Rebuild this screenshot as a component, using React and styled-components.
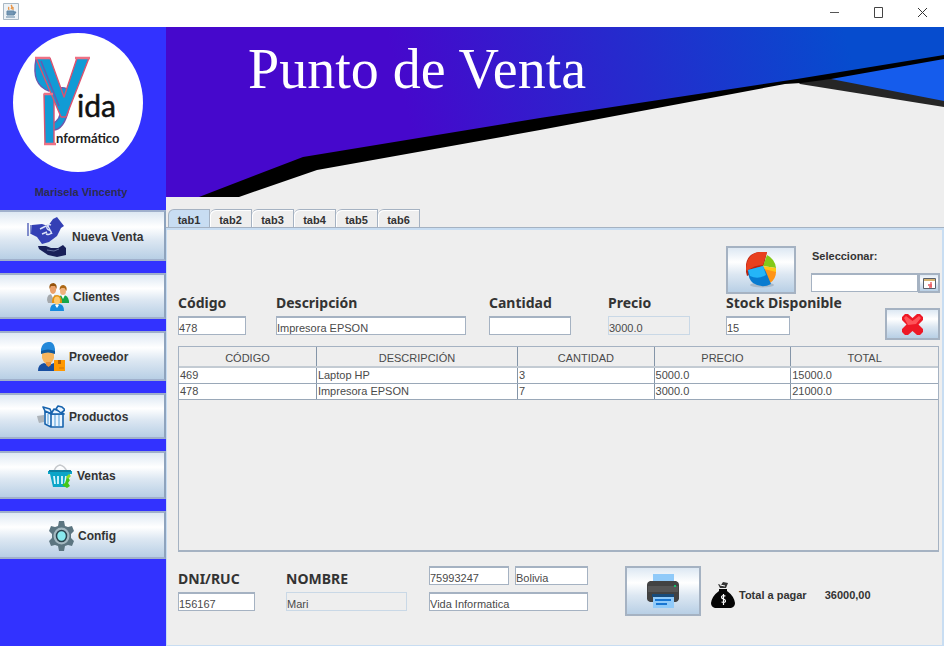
import React from "react";
import styled, { createGlobalStyle } from "styled-components";

const steel = "#a5b2c2";
const face = "linear-gradient(#dde8f3 0%, #ffffff 32%, #dce7f2 60%, #b8cfe5 100%)";

const GlobalStyle = createGlobalStyle`
  *, *::before, *::after { box-sizing: border-box; }
  body {
    margin: 0;
    background: #eeeeee;
    color: #333333;
    font: 11px/14px "Liberation Sans", Arial, sans-serif;
  }
  button, input { font: inherit; color: inherit; margin: 0; }
`;

const Window = styled.div`
  display: flex;
  flex-direction: column;
  min-height: 100vh;
`;

const TitleBar = styled.header`
  display: flex;
  justify-content: space-between;
  align-items: flex-start;
  height: 27px;
  padding-left: 3px;
  background: #ffffff;
`;

const AppIcon = styled.svg`
  width: 16px;
  height: 17px;
  margin-top: 3px;
`;

const WindowButtons = styled.div`
  display: flex;
`;

const WindowButton = styled.button`
  width: 44px;
  height: 25px;
  padding: 0;
  border: 0;
  background: none;
  svg { display: block; margin: 0 auto; }
`;

const Body = styled.div`
  display: flex;
  flex: 1;
`;

const Sidebar = styled.aside`
  display: flex;
  flex-direction: column;
  flex: 0 0 166px;
  background: #3232ff;
`;

const Logo = styled.svg`
  width: 130px;
  height: 139px;
  margin: 6px 0 0 13px;
`;

const UserName = styled.p`
  height: 19px;
  margin: 12px 4px 7px 0;
  padding-top: 1px;
  text-align: center;
  font-weight: bold;
  color: #2c2c50;
`;

const Nav = styled.nav`
  display: flex;
  flex-direction: column;
  gap: 12px;
`;

const NavButton = styled.button`
  display: flex;
  align-items: center;
  gap: ${(p) => p.$gap || 4}px;
  height: ${(p) => p.$height}px;
  padding: 2px 0 0 ${(p) => p.$indent}px;
  border: solid #a0b0cc;
  border-width: 2px 2px 2px 0;
  border-right-color: #8ea3bd;
  background: ${face};
  font-size: 12px;
  font-weight: bold;
  svg { flex: none; }
`;

const Main = styled.main`
  display: flex;
  flex-direction: column;
  flex: 1;
  min-width: 0;
`;

const Banner = styled.div`
  position: relative;
  height: 170px;
`;

const BannerArt = styled.svg`
  position: absolute;
  inset: 0;
  width: 100%;
  height: 100%;
`;

const BannerTitle = styled.h1`
  position: relative;
  margin: 0;
  padding: 10px 0 0 82px;
  font: 56px/64px "Liberation Serif", "Times New Roman", serif;
  color: #ffffff;
`;

const TabList = styled.div`
  display: flex;
  padding: 12px 0 0 2px;
`;

const Tab = styled.button`
  width: 42px;
  height: 19px;
  padding: 2px 0 0;
  border: 1px solid ${steel};
  border-width: 1px 1px 0 0;
  border-top-left-radius: 6px;
  background: ${(p) => (p.$active ? "#c8ddf2" : "#eeeeee")};
  box-shadow: inset 1px 1px 0 ${(p) => (p.$active ? "#c8ddf2" : "#ffffff")};
  font-weight: bold;
  &:first-child { border-left-width: 1px; }
`;

const Panel = styled.section`
  display: flex;
  flex-direction: column;
  flex: 1;
  padding: 16px 2px 21px 11px;
  border: solid #c8ddf2;
  border-width: 2px 2px 1px 1px;
  box-shadow: 0 -1px 0 ${steel};
`;

const ProductForm = styled.form`
  display: grid;
  grid-template-columns: 98fr 213fr 119fr 118fr 214fr;
`;

const Tools = styled.div`
  grid-column: 5;
  display: flex;
  justify-content: space-between;
`;

const IconButton = styled.button`
  display: flex;
  align-items: center;
  justify-content: center;
  flex: none;
  width: ${(p) => p.$width}px;
  height: ${(p) => p.$height}px;
  padding: 0;
  border: 2px solid ${steel};
  background: ${face};
`;

const DatePicker = styled.div`
  width: 129px;
  padding-top: 3px;
  label { display: block; height: 24px; padding-left: 1px; font-weight: bold; }
`;

const DateRow = styled.div`
  display: flex;
`;

const Field = styled.div`
  display: flex;
  flex-direction: column;
  align-items: flex-start;
`;

const Caption = styled.label`
  height: 22px;
  font: bold 14px/18px "Noto Sans", Tahoma, sans-serif;
  white-space: nowrap;
`;

const TextBox = styled.input`
  width: ${(p) => (p.$width ? p.$width + "px" : "100%")};
  min-width: 0;
  height: 19px;
  padding: 3px 0 0;
  border: 1px solid ${steel};
  border-top-width: 2px;
  border-radius: 0;
  outline: 0;
  background: #ffffff;
  color: #4a4a4a;
  &:disabled {
    background: #eeeeee;
    border: 1px solid #c9d8e6;
    padding-top: 4px;
  }
`;

const StockRow = styled.div`
  display: flex;
  justify-content: space-between;
  align-items: flex-start;
  height: 46px;
`;

const DeleteSlot = styled.div`
  padding-top: 14px;
`;

const TableArea = styled.div`
  flex: 1;
  min-height: 140px;
  margin: 6px 1px 14px 0;
  border: 1px solid ${steel};
  border-bottom-width: 2px;
`;

const Items = styled.table`
  width: 100%;
  table-layout: fixed;
  border-collapse: collapse;
  color: #4a4a4a;
  th {
    height: 20px;
    padding: 2px 0 0;
    font-weight: normal;
    border-right: 1px solid #8495a8;
    border-bottom: 2px solid #c3cbd3;
  }
  td {
    height: 16px;
    padding: 1px 0 0 1px;
    line-height: 13px;
    background: #ffffff;
    border-right: 1px solid #8495a8;
    border-bottom: 1px solid #9aa8b8;
  }
  th:last-child, td:last-child { border-right: 0; }
`;

const Col = styled.col`
  width: ${(p) => p.$share}%;
`;

const Footer = styled.form`
  display: flex;
  align-items: flex-start;
`;

const Client = styled.div`
  display: flex;
  gap: 31px;
  padding-top: 4px;
`;

const ClientField = styled(Field)`
  width: ${(p) => p.$width}px;
`;

const Details = styled.div`
  display: grid;
  grid-template-columns: 80px 73px;
  gap: 7px 6px;
  margin: 0 37px 0 22px;
  input:last-child { grid-column: 1 / 3; }
`;

const Total = styled.div`
  display: flex;
  align-items: center;
  gap: 4px;
  height: 58px;
  margin-left: 10px;
  font-weight: bold;
  white-space: nowrap;
  output { margin-left: 14px; }
`;

const PaySheet = () => (
  <svg width="39" height="42" viewBox="0 0 39 42">
    <path d="M1 7v13M4 9v9" stroke="#5261b8" strokeWidth="1.4" />
    <path d="M5 9l10-1 6 2 5-7 4-2 7 9-3 2-4 8-8 6-7 2-5-7-6-3z" fill="#3440b5" />
    <path d="M13 13l6-3M15 18l5-2M24 9c-4-2-6 4-2 5s2 6-3 4M20 8l5 10" fill="none" stroke="#dce4f8" strokeWidth="1.4" />
    <path d="M11 30h8l5 2 7 0 5-3 3 3v7l-9 2-9-2-9-6z" fill="#182059" />
    <path d="M20 34l7 1 5-2" stroke="#6270a0" fill="none" />
  </svg>
);

const People = () => (
  <svg width="22" height="29" viewBox="0 0 22 29">
    <path d="M0 17q0-6 5-6t5 6v3H1z" fill="#a5a9ad" />
    <path d="M11 18q0-6 5-6t6 6v2h-9z" fill="#16a64a" />
    <path d="M4 11l2 4 2-4M14 12l2 4 2-4" fill="#fff" />
    <ellipse cx="6" cy="6" rx="3.2" ry="5" fill="#eaa06a" />
    <path d="M2.500 6q-1-6 4-6 4 1 3 6L8 3H4z" fill="#94520b" />
    <ellipse cx="16" cy="7.500" rx="3" ry="4.600" fill="#f0b27c" />
    <path d="M12.500 7q0-5 4-5 4 1 3 6l-2-3h-3z" fill="#ad6815" />
    <path d="M5 20q0-8 5-8t5 8z" fill="#e5930e" />
    <ellipse cx="10" cy="17.500" rx="3" ry="4" fill="#ffc86d" />
    <path d="M3 28q0-7 5-7l2 2 2-2q5 0 5 7z" fill="#168bdd" />
    <path d="M8 22l2 3 2-3z" fill="#fff" />
  </svg>
);

const Courier = () => (
  <svg width="28" height="30" viewBox="0 0 28 30">
    <path d="M1 29q0-7 6-8l5 2 5-2v8z" fill="#174ea0" />
    <path d="M5 9h12v7q-2 6-6 6t-6-6z" fill="#f8b55e" />
    <path d="M9 20h5v3l-2.500 2L9 23z" fill="#e8903a" />
    <path d="M4 11V7q1-6 7-7t7 7v4l-3-2H7z" fill="#2489da" />
    <path d="M4 9q7-3 14 0v3q-7-3-14 0z" fill="#11599f" />
    <path d="M17 18h11v11H17z" fill="#ff9800" />
    <path d="M21 18h3v4h-3z" fill="#ad5f09" />
    <path d="M22 26h5" stroke="#d47608" />
  </svg>
);

const Boxes = () => (
  <svg width="28" height="24" viewBox="0 0 28 24">
    <path d="M0 11l7-1v7l-5 1-1-3z" fill="#aeb4ba" />
    <g fill="#eaf5ff" stroke="#1763ad" strokeWidth="1.6" strokeLinejoin="round">
      <path d="M8 6l6 3v13l-6-3zM14 9h12v13H14z" />
      <path d="M8 6L6 2l7 2 2 5zM14 9l3-5 5 2 5 3z" />
      <path d="M19 4l2-3 4 1 3 3-4 3z" />
    </g>
    <path d="M18 10v11M22 10v11M11 9v10" stroke="#72b1e3" strokeWidth="1.3" />
  </svg>
);

const Basket = () => (
  <svg width="25" height="24" viewBox="0 0 25 24">
    <path d="M6 8q1-6 6-7 5 1 7 7" fill="none" stroke="#c6c9cd" strokeWidth="1.6" />
    <path d="M0 7h24v3h-2l-3 13H5L2 10H0z" fill="#0ba5c8" />
    <path d="M1 7h22" stroke="#0d7e9f" strokeWidth="2" />
    <path d="M6 12l1 8M10 12v8M14 12v8M18 12l-1 8" stroke="#d9f7ff" strokeWidth="1.8" />
    <path d="M19 13l3 3-2 3 2 3-3 2-5-3 3-2 1-3z" fill="#42c818" />
    <path d="M21 10l2 2-3 3-2-2z" fill="#8ddd24" />
  </svg>
);

const Gear = () => (
  <svg width="25" height="30" viewBox="0 0 25 30">
    <path d="M10 0h5l1 5 3 1 4-1 2 5-3 3v4l3 3-2 5-4-1-3 1-1 5h-5l-1-5-3-1-4 1-2-5 3-3v-4l-3-3 2-5 4 1 3-1z" fill="#5c7580" />
    <ellipse cx="12.500" cy="15" rx="8" ry="8.500" fill="#a5b9c1" />
    <ellipse cx="12.500" cy="15" rx="5" ry="5.500" fill="#89e9ed" stroke="#29444d" strokeWidth="1.500" />
  </svg>
);

const PieChart = () => (
  <svg width="31" height="36" viewBox="0 0 31 36">
    <ellipse cx="16" cy="33" rx="12" ry="2.500" fill="#a9b9c9" />
    <path d="M0 20Q-2 2 13 0h8l-3 13-7 6-10 5z" fill="#b82412" />
    <path d="M0 17Q1 1 14 0h7l-4 13q-9 0-16 6z" fill="#e8401f" />
    <path d="M21 3q8 4 9 13l-13-2z" fill="#83c918" />
    <path d="M17 14l13 2v5l-11-2z" fill="#ffc515" />
    <path d="M18 17l12 3q0 7-6 11l-5-8z" fill="#ff9416" />
    <path d="M2 18l15-4 3 6 5 12q-9 5-18-1-5-4-5-13z" fill="#087bd0" />
    <path d="M2 18l15-4 3 9q-8 5-16 1z" fill="#24b5f8" />
  </svg>
);

const CalendarIcon = () => (
  <svg width="13" height="11" viewBox="0 0 13 11">
    <path d="M.5.5h12v10H.5z" fill="#fff" stroke="#59606b" />
    <path d="M1 2h11" stroke="#c89b43" strokeWidth="1.5" />
    <path d="M5 7h4M8 4v5M6 9h3" stroke="#e75a60" strokeWidth="1.4" />
  </svg>
);

const Cross = () => (
  <svg width="21" height="21" viewBox="0 0 21 21">
    <path d="M3 0h3l4.500 4L15 0h3l3 3v3l-4.500 4.500L21 15v3l-3 3h-3l-4.500-4L6 21H3l-3-3v-3l4.500-4.500L0 6V3z" fill="#ee1826" />
    <path d="M4 2l6.500 5L17 2l2 2-5 6-8 1-4-7z" fill="#ff5359" />
  </svg>
);

const Printer = () => (
  <svg width="32" height="34" viewBox="0 0 32 34">
    <path d="M6 0h21v9H6z" fill="#90caf9" />
    <path d="M3 7h26q3 1 3 4v14q-1 3-3 3H3q-3-1-3-3V11q0-3 3-4z" fill="#424242" />
    <path d="M1 12h30v6H1z" fill="#555" />
    <circle cx="28" cy="12" r="1" fill="#00e676" />
    <path d="M5 20h22v3H5z" fill="#174b7b" />
    <path d="M6 23h21v11H6z" fill="#90caf9" />
    <path d="M8 26h16M9 30h11" stroke="#1976d2" strokeWidth="2" />
  </svg>
);

const MoneyBag = () => (
  <svg width="24" height="26" viewBox="0 0 24 26">
    <path d="M7 2l3 1 2-3 5 1-2 5H9z" fill="#343434" />
    <path d="M9 3l5 1" stroke="#fff" />
    <path d="M8 7h8v2q7 5 8 12 0 4-4 5H4q-4-1-4-5 1-7 8-12z" fill="#050505" />
    <path d="M14.500 14q-4-1-4 1 0 1.500 2 2 2 .5 2 2 0 2-4 1M12.500 12v11" fill="none" stroke="#fff" strokeWidth="1.200" />
  </svg>
);

const BrandLogo = () => (
  <Logo viewBox="0 0 130 139" role="img" aria-label="Vida Informático">
    <ellipse cx="65" cy="69.500" rx="65" ry="69.500" fill="#ffffff" />
    <g fill="#119bd5" stroke="#dc526f" strokeWidth="1.400" strokeLinejoin="round">
      <path d="M23 26Q18 52 36 58l6-4z" stroke="#6c58ae" />
      <path d="M46 55q15-3 10 20t-17 22v-6q9-4 9-16z" stroke="#6c58ae" />
      <path d="M31 61h10v50H32z" />
      <path d="M23 25h14l14 39 13-39h12L53 84h-5z" />
      <path d="M28 28l18 45" fill="none" stroke="#6c58ae" />
    </g>
    <path d="M22 25h15M62 25h15M31 111h12M31 61h9" stroke="#ed7185" strokeWidth="2.500" />
    <text x="64" y="84" fontFamily="Lato, sans-serif" fontSize="30" fill="#111" stroke="#111" strokeWidth=".5">ida</text>
    <text x="43" y="110" fontFamily="Lato, sans-serif" fontSize="13" fontWeight="bold" fill="#222">nformático</text>
  </Logo>
);

const navItems = [
  { label: "Nueva Venta", icon: PaySheet, height: 51, indent: 27, gap: 6 },
  { label: "Clientes", icon: People, height: 46, indent: 47 },
  { label: "Proveedor", icon: Courier, height: 50, indent: 37 },
  { label: "Productos", icon: Boxes, height: 46, indent: 37 },
  { label: "Ventas", icon: Basket, height: 48, indent: 48 },
  { label: "Config", icon: Gear, height: 48, indent: 49 },
];

const tabs = ["tab1", "tab2", "tab3", "tab4", "tab5", "tab6"];

const fields = [
  { id: "codigo", label: "Código", value: "478", width: 68 },
  { id: "descripcion", label: "Descripción", value: "Impresora EPSON", width: 190 },
  { id: "cantidad", label: "Cantidad", value: "", width: 82 },
  { id: "precio", label: "Precio", value: "3000.0", width: 82, disabled: true },
];

const columns = [
  { title: "CÓDIGO", share: 18.1 },
  { title: "DESCRIPCIÓN", share: 26.5 },
  { title: "CANTIDAD", share: 18 },
  { title: "PRECIO", share: 18 },
  { title: "TOTAL", share: 19.4 },
];

const rows = [
  ["469", "Laptop HP", "3", "5000.0", "15000.0"],
  ["478", "Impresora EPSON", "7", "3000.0", "21000.0"],
];

export default function App() {
  const [active, setActive] = React.useState("tab1");
  return (
    <Window>
      <GlobalStyle />
      <TitleBar>
        <AppIcon viewBox="0 0 16 17" aria-hidden="true">
          <path d="M.5.500h15v16H.5z" fill="#edf2f6" stroke="#a9b8c4" />
          <path d="M8 2q2 2 0 4M6 4q-1 1 0 3M10 4v3" stroke="#e69345" fill="none" strokeWidth="1.300" />
          <path d="M4 8h7v4H4zM11 9h2l-2 3M3 14h9" fill="#7396b4" stroke="#6387a5" />
        </AppIcon>
        <WindowButtons>
          <WindowButton type="button" aria-label="Minimizar">
            <svg width="11" height="11"><path d="M1 5.500h9" stroke="#555" /></svg>
          </WindowButton>
          <WindowButton type="button" aria-label="Maximizar">
            <svg width="11" height="11"><path d="M1.500.500h8v10h-8z" stroke="#444" fill="none" /></svg>
          </WindowButton>
          <WindowButton type="button" aria-label="Cerrar">
            <svg width="11" height="11"><path d="M1 1l9 9M10 1l-9 9" stroke="#333" /></svg>
          </WindowButton>
        </WindowButtons>
      </TitleBar>
      <Body>
        <Sidebar>
          <BrandLogo />
          <UserName>Marisela Vincenty</UserName>
          <Nav>
            {navItems.map(({ label, icon: Icon, height, indent, gap }) => (
              <NavButton key={label} type="button" $height={height} $indent={indent} $gap={gap}>
                <Icon />
                {label}
              </NavButton>
            ))}
          </Nav>
        </Sidebar>
        <Main>
          <Banner>
            <BannerArt viewBox="0 0 778 170" preserveAspectRatio="none" aria-hidden="true">
              <defs>
                <linearGradient id="sky" gradientUnits="userSpaceOnUse" x1="250" y1="120" x2="680" y2="10">
                  <stop offset="0" stopColor="#4608cc" />
                  <stop offset="1" stopColor="#064cce" />
                </linearGradient>
              </defs>
              <path d="M0 0h778v30L631 54 374 94 137 133 43 170H0z" fill="url(#sky)" />
              <path d="M628 54L778 30v48z" fill="#155cec" />
              <path d="M630 53l35-1 113 22v6L634 57z" fill="#262626" />
              <path d="M33 170l104-40L374 91 631 52 778 28v4L665 52l-30 4-16 1L374 103 151 143 73 170z" fill="#000000" />
            </BannerArt>
            <BannerTitle>Punto de Venta</BannerTitle>
          </Banner>
          <TabList role="tablist">
            {tabs.map((name) => (
              <Tab
                key={name}
                type="button"
                role="tab"
                aria-selected={active === name}
                $active={active === name}
                onClick={() => setActive(name)}
              >
                {name}
              </Tab>
            ))}
          </TabList>
          <Panel>
            <ProductForm>
              <Tools>
                <IconButton type="button" $width={70} $height={48} aria-label="Gráfico">
                  <PieChart />
                </IconButton>
                <DatePicker>
                  <label htmlFor="fecha">Seleccionar:</label>
                  <DateRow>
                    <TextBox id="fecha" />
                    <IconButton type="button" $width={22} $height={20} aria-label="Calendario">
                      <CalendarIcon />
                    </IconButton>
                  </DateRow>
                </DatePicker>
              </Tools>
              {fields.map((f) => (
                <Field key={f.id}>
                  <Caption htmlFor={f.id}>{f.label}</Caption>
                  <TextBox id={f.id} defaultValue={f.value} $width={f.width} disabled={f.disabled} />
                </Field>
              ))}
              <StockRow>
                <Field>
                  <Caption htmlFor="stock">Stock Disponible</Caption>
                  <TextBox id="stock" defaultValue="15" $width={64} />
                </Field>
                <DeleteSlot>
                  <IconButton type="button" $width={55} $height={32} aria-label="Eliminar">
                    <Cross />
                  </IconButton>
                </DeleteSlot>
              </StockRow>
            </ProductForm>
            <TableArea>
              <Items>
                <colgroup>
                  {columns.map((c) => (
                    <Col key={c.title} $share={c.share} />
                  ))}
                </colgroup>
                <thead>
                  <tr>
                    {columns.map((c) => (
                      <th key={c.title} scope="col">{c.title}</th>
                    ))}
                  </tr>
                </thead>
                <tbody>
                  {rows.map((row) => (
                    <tr key={row[0]}>
                      {row.map((cell, i) => (
                        <td key={i}>{cell}</td>
                      ))}
                    </tr>
                  ))}
                </tbody>
              </Items>
            </TableArea>
            <Footer>
              <Client>
                <ClientField $width={77}>
                  <Caption htmlFor="dni">DNI/RUC</Caption>
                  <TextBox id="dni" defaultValue="156167" />
                </ClientField>
                <ClientField $width={121}>
                  <Caption htmlFor="nombre">NOMBRE</Caption>
                  <TextBox id="nombre" defaultValue="Mari" disabled />
                </ClientField>
              </Client>
              <Details>
                <TextBox aria-label="Teléfono" defaultValue="75993247" />
                <TextBox aria-label="Dirección" defaultValue="Bolivia" />
                <TextBox aria-label="Razón social" defaultValue="Vida Informatica" />
              </Details>
              <IconButton type="button" $width={76} $height={50} aria-label="Imprimir">
                <Printer />
              </IconButton>
              <Total>
                <MoneyBag />
                <span>Total a pagar</span>
                <output>36000,00</output>
              </Total>
            </Footer>
          </Panel>
        </Main>
      </Body>
    </Window>
  );
}
